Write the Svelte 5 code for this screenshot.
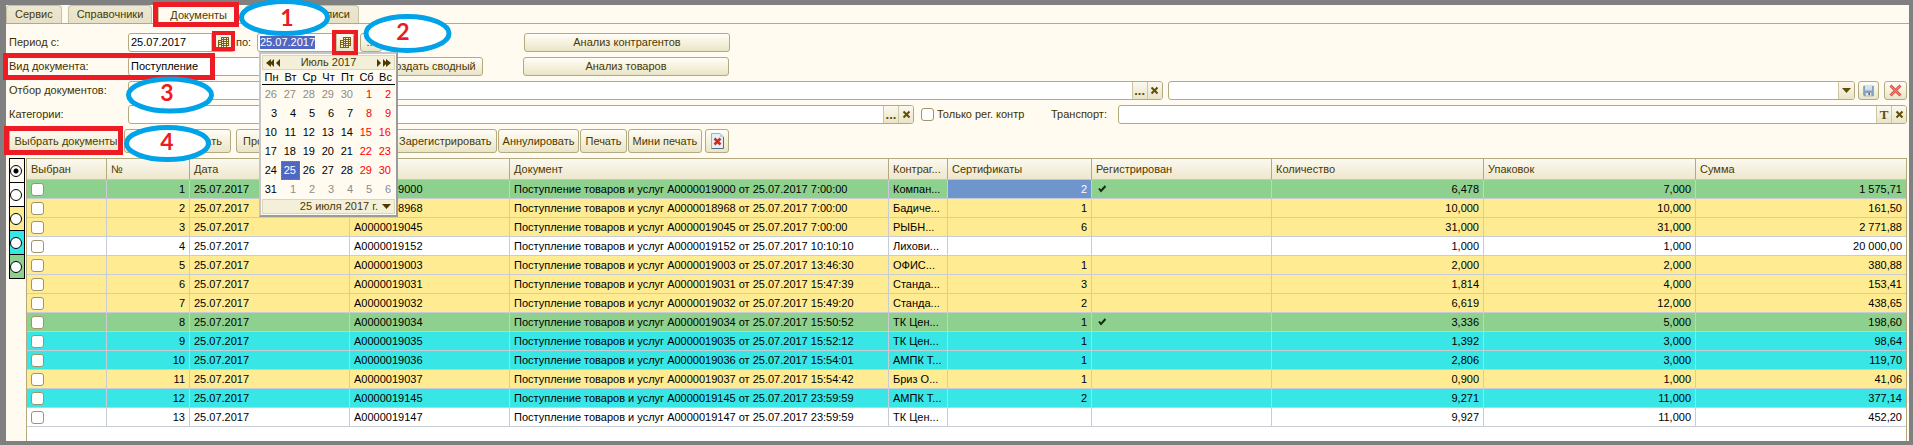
<script lang="ts">
	import { onMount } from 'svelte';

	const tabs = [
		{ title: 'Сервис', wide: false },
		{ title: 'Справочники', wide: false },
		{ title: 'Документы', wide: false },
		{ title: 'Записи', wide: true }
	];
	let activeTab = 'Документы';

	let dateFrom = '25.07.2017';
	let dateTo = '25.07.2017';
	let dateToInput: HTMLInputElement;

	const weekdays = ['Пн', 'Вт', 'Ср', 'Чт', 'Пт', 'Сб', 'Вс'];
	const weeks = [
		[26, 27, 28, 29, 30, 1, 2],
		[3, 4, 5, 6, 7, 8, 9],
		[10, 11, 12, 13, 14, 15, 16],
		[17, 18, 19, 20, 21, 22, 23],
		[24, 25, 26, 27, 28, 29, 30],
		[31, 1, 2, 3, 4, 5, 6]
	];
	let selectedDay = 25;

	const legend = ['cream', 'white', 'yellow', 'cyan', 'green'];
	let filter = 'cream';

	const columns = ['Выбран', '№', 'Дата', '', 'Документ', 'Контраг...', 'Сертификаты', 'Регистрирован', 'Количество', 'Упаковок', 'Сумма'];

	const rows = [
		{ color: 'green', num: '0000019000', time: '7:00:00', agent: 'Компан...', cert: '2', reg: true, qty: '6,478', packs: '7,000', sum: '1 575,71' },
		{ color: 'yellow', num: '0000018968', time: '7:00:00', agent: 'Бадиче...', cert: '1', reg: false, qty: '10,000', packs: '10,000', sum: '161,50' },
		{ color: 'yellow', num: '0000019045', time: '7:00:00', agent: 'РЫБН...', cert: '6', reg: false, qty: '31,000', packs: '31,000', sum: '2 771,88' },
		{ color: 'white', num: '0000019152', time: '10:10:10', agent: 'Лихови...', cert: '', reg: false, qty: '1,000', packs: '1,000', sum: '20 000,00' },
		{ color: 'yellow', num: '0000019003', time: '13:46:30', agent: 'ОФИС...', cert: '1', reg: false, qty: '2,000', packs: '2,000', sum: '380,88' },
		{ color: 'yellow', num: '0000019031', time: '15:47:39', agent: 'Станда...', cert: '3', reg: false, qty: '1,814', packs: '4,000', sum: '153,41' },
		{ color: 'yellow', num: '0000019032', time: '15:49:20', agent: 'Станда...', cert: '2', reg: false, qty: '6,619', packs: '12,000', sum: '438,65' },
		{ color: 'green', num: '0000019034', time: '15:50:52', agent: 'ТК Цен...', cert: '1', reg: true, qty: '3,336', packs: '5,000', sum: '198,60' },
		{ color: 'cyan', num: '0000019035', time: '15:52:12', agent: 'ТК Цен...', cert: '1', reg: false, qty: '1,392', packs: '3,000', sum: '98,64' },
		{ color: 'cyan', num: '0000019036', time: '15:54:01', agent: 'АМПК Т...', cert: '1', reg: false, qty: '2,806', packs: '3,000', sum: '119,70' },
		{ color: 'yellow', num: '0000019037', time: '15:54:42', agent: 'Бриз О...', cert: '1', reg: false, qty: '0,900', packs: '1,000', sum: '41,06' },
		{ color: 'cyan', num: '0000019145', time: '23:59:59', agent: 'АМПК Т...', cert: '2', reg: false, qty: '9,271', packs: '11,000', sum: '377,14' },
		{ color: 'white', num: '0000019147', time: '23:59:59', agent: 'ТК Цен...', cert: '', reg: false, qty: '9,927', packs: '11,000', sum: '452,20' }
	];

	// first row holds the previous month, last row the next one
	function isOther(week: number, day: number) {
		return (week === 0 && day > 20) || (week === 5 && day < 10);
	}

	onMount(() => {
		dateToInput.focus();
		dateToInput.select();
	});
</script>

{#snippet cross()}
	<svg width="9" height="9" viewBox="0 0 9 9"><path d="M1.5 1.5 7.5 7.5M7.5 1.5 1.5 7.5" stroke="#5f4d08" stroke-width="2" /></svg>
{/snippet}

{#snippet calendarIcon()}
	<svg width="11" height="11" viewBox="0 0 11 11">
		<path d="M3 0h8v9H9v2H0V3h3z" fill="#7a6116" />
		<path d="M4 1h1v1H4zM6 1h2v1H6zM9 1h1v1H9zM1 4h2v1H1zM4 3h1v1H4zM6 3h2v1H6zM9 3h1v1H9zM4 5h1v1H4zM6 5h2v1H6zM9 5h1v1H9zM1 6h2v1H1zM4 7h1v1H4zM6 7h2v1H6zM9 7h1v1H9zM1 8h2v2H1zM4 9h1v1H4zM6 9h2v1H6z" fill="#f6f0d8" />
	</svg>
{/snippet}

<main>
	<nav>
		{#each tabs as tab}
			<button class="tab" class:active={tab.title === activeTab} class:wide={tab.wide} on:click={() => (activeTab = tab.title)}>{tab.title}</button>
		{/each}
	</nav>

	<section class="form">
		<div class="row">
			<label class="caption" for="from">Период с:</label>
			<div class="field date-from">
				<input id="from" bind:value={dateFrom} />
				<button class="calendar-button" aria-label="Выбрать дату начала">{@render calendarIcon()}</button>
			</div>
			<label class="to" for="to">по:</label>
			<div class="date-to">
				<div class="field">
					<input id="to" bind:value={dateTo} bind:this={dateToInput} />
					<button class="calendar-button" aria-label="Выбрать дату окончания">{@render calendarIcon()}</button>
				</div>
				<div class="calendar">
					<div class="month">
						<button aria-label="Назад">
							<svg width="14" height="8" viewBox="0 0 14 8"><path d="M5 0v8L0 4zM8 0v8L4 4zM14 0v8L10 4z" fill="#4b3900" /></svg>
						</button>
						<span>Июль 2017</span>
						<button aria-label="Вперёд">
							<svg width="14" height="8" viewBox="0 0 14 8"><path d="M0 0v8L4 4zM6 0v8L10 4zM9 0v8L14 4z" fill="#4b3900" /></svg>
						</button>
					</div>
					<table class="days">
						<thead>
							<tr>{#each weekdays as day}<th>{day}</th>{/each}</tr>
						</thead>
						<tbody>
							{#each weeks as week, w}
								<tr>
									{#each week as day, d}
										<td class:weekend={d > 4} class:other={isOther(w, day)} class:selected={day === selectedDay && !isOther(w, day)}>{day}</td>
									{/each}
								</tr>
							{/each}
						</tbody>
					</table>
					<button class="today">
						25 июля 2017 г.
						<svg width="9" height="5" viewBox="0 0 9 5"><path d="M0 0h9L4.500 5z" fill="#4b3900" /></svg>
					</button>
				</div>
			</div>
			<button class="btn more">...</button>
			<button class="btn analysis">Анализ контрагентов</button>
		</div>

		<div class="row">
			<label class="caption" for="kind">Вид документа:</label>
			<div class="field kind">
				<select id="kind"><option>Поступление</option></select>
			</div>
			<button class="btn summary">Создать сводный</button>
			<button class="btn analysis second">Анализ товаров</button>
		</div>

		<div class="row">
			<label class="caption" for="docs">Отбор документов:</label>
			<div class="field docs">
				<input id="docs" />
				<button class="dots">...</button>
				<button aria-label="Очистить отбор">{@render cross()}</button>
			</div>
			<div class="field preset">
				<select aria-label="Вариант отбора"><option></option></select>
				<span class="arrow">
					<svg width="9" height="5" viewBox="0 0 9 5"><path d="M0 0h9L4.500 5z" fill="#5f4d08" /></svg>
				</span>
			</div>
			<button class="btn save" aria-label="Сохранить">
				<svg width="16" height="16" viewBox="0 0 16 16">
					<path d="M1 1h14v14H2L1 14z" fill="#86a9c6" stroke="#6787a3" />
					<path d="M3 1h10v6H3z" fill="#e9f4fb" />
					<path d="M3 3.500h10M3 5.500h10" stroke="#a9cbe2" />
					<path d="M4 9h8v6H4z" fill="#e3e5e8" />
					<path d="M4 9h8v1H4zM8 11h2v3H8z" fill="#4b5259" />
				</svg>
			</button>
			<button class="btn remove" aria-label="Удалить">
				<svg width="13" height="13" viewBox="0 0 13 13">
					<path d="M1.500 1.500 11.500 11.500M11.500 1.500 1.500 11.500" stroke="#d9574c" stroke-width="3" />
					<path d="M2 2 11 11M11 2 2 11" stroke="#f58a7c" stroke-width="1" />
				</svg>
			</button>
		</div>

		<div class="row">
			<label class="caption" for="cats">Категории:</label>
			<div class="field cats">
				<input id="cats" />
				<button class="dots">...</button>
				<button aria-label="Очистить категории">{@render cross()}</button>
			</div>
			<label class="only"><input type="checkbox" />Только рег. контр</label>
			<label class="transport-label" for="transport">Транспорт:</label>
			<div class="field transport">
				<input id="transport" />
				<button class="type">T</button>
				<button aria-label="Очистить транспорт">{@render cross()}</button>
			</div>
		</div>

		<div class="toolbar">
			<button class="btn choose">Выбрать документы</button>
			<button class="btn print-all">Печатать</button>
			<button class="btn preview">Провести</button>
			<button class="btn">Зарегистрировать</button>
			<button class="btn">Аннулировать</button>
			<button class="btn">Печать</button>
			<button class="btn">Мини печать</button>
			<button class="btn close" aria-label="Очистить">
				<svg width="13" height="16" viewBox="0 0 13 16">
					<path d="M.5.5h8.500l3.500 3.500v11.500H.5z" fill="#e4f0f7" stroke="#9bb3c3" />
					<path d="M12.500 4v11.500H.5" fill="none" stroke="#546f82" />
					<path d="M9 0v4h4" fill="#b8d3e4" />
					<path d="M3.500 5.500 9.500 11.500M9.500 5.500 3.500 11.500" stroke="#d02a20" stroke-width="2.500" />
				</svg>
			</button>
		</div>
	</section>

	<section class="list">
		<div class="legend">
			{#each legend as color}
				<label class={color}><input type="radio" value={color} bind:group={filter} aria-label={color} /></label>
			{/each}
		</div>
		<div class="grid">
			<table class="documents">
				<colgroup>
					{#each columns as _, i}<col class="c{i}" />{/each}
				</colgroup>
				<thead>
					<tr>
						{#each columns as title}<th>{title}</th>{/each}
					</tr>
				</thead>
				<tbody>
					{#each rows as row, i}
						<tr class={row.color}>
							<td><input type="checkbox" aria-label="Выбрать строку {i + 1}" /></td>
							<td class="num">{i + 1}</td>
							<td>25.07.2017</td>
							<td>А{row.num}</td>
							<td>Поступление товаров и услуг А{row.num} от 25.07.2017 {row.time}</td>
							<td>{row.agent}</td>
							<td class="num" class:current={i === 0}>{row.cert}</td>
							<td>
								{#if row.reg}
									<svg class="check" width="8" height="8" viewBox="0 0 8 8"><path d="M1 3.500 3 6 7.500 1" fill="none" stroke="#132b13" stroke-width="2" /></svg>
								{/if}
							</td>
							<td class="num">{row.qty}</td>
							<td class="num">{row.packs}</td>
							<td class="num">{row.sum}</td>
						</tr>
					{/each}
				</tbody>
			</table>
		</div>
	</section>

	<svg class="marks" width="460" height="170" viewBox="0 0 460 170">
		<g fill="none" stroke="#ed1c24" stroke-width="4">
			<rect x="155.500" y="4.500" width="81" height="20" stroke-width="5" />
			<rect x="214" y="33" width="19" height="16" />
			<rect x="334" y="32" width="22" height="21" />
			<rect x="5.500" y="55.500" width="207" height="22" stroke-width="5" />
			<rect x="6.500" y="128.500" width="114" height="24" stroke-width="5" />
		</g>
		<g fill="#fff" stroke="#00a2e8" stroke-width="5">
			<ellipse cx="284.500" cy="17.500" rx="43" ry="16" />
			<ellipse cx="407.500" cy="33.500" rx="41.500" ry="17" />
			<ellipse cx="170" cy="95" rx="41.500" ry="16" />
			<ellipse cx="167.500" cy="143.500" rx="41" ry="16" />
		</g>
		<g class="digits">
			<text x="287" y="26">1</text>
			<text x="403" y="40">2</text>
			<text x="167" y="101">3</text>
			<text x="167" y="150">4</text>
		</g>
	</svg>
</main>

<style>
	:global(body) {
		background: #808080;
	}

	main {
		position: relative;
		display: flex;
		flex-direction: column;
		box-sizing: border-box;
		min-height: 100vh;
		border: solid #808080;
		border-width: 5px 4px 4px 6px;
		background: #fffbf0;
		color: #3f3000;
		font: 11px/13px 'Liberation Sans', Arial, sans-serif;
	}

	button,
	input,
	select {
		margin: 0;
		padding: 0;
		font: inherit;
		color: inherit;
		outline: none;
	}

	svg {
		display: block;
	}

	nav {
		display: flex;
		align-items: flex-end;
		gap: 6px;
		height: 18px;
		border-bottom: 1px solid #b3aa80;
	}

	.tab {
		height: 18px;
		padding: 0 8px;
		border: 1px solid #c9c19d;
		border-bottom: none;
		border-radius: 4px 4px 0 0;
		background: linear-gradient(#ece8d2, #e6e1c6);
		color: #4b3900;
	}

	.tab.active {
		height: 19px;
		margin-bottom: -1px;
		padding: 0 11px;
		background: #fffbf0;
	}

	.tab.wide {
		width: 114px;
		text-align: right;
	}

	.form {
		display: flex;
		flex-direction: column;
		gap: 5px;
		padding: 9px 2px 5px 2px;
	}

	.row {
		display: flex;
		align-items: center;
		height: 19px;
	}

	.caption {
		flex: 0 0 119px;
		padding-left: 1px;
	}

	.field {
		display: flex;
		box-sizing: border-box;
		height: 19px;
		border: 1px solid #b3aa80;
		border-radius: 3px;
		background: #fff;
		overflow: hidden;
	}

	.field input,
	.field select {
		flex: 1;
		min-width: 0;
		padding-left: 2px;
		border: none;
		appearance: none;
		background: transparent;
		color: #000;
	}

	.field input::selection {
		background: #4f67c0;
		color: #fff;
	}

	.field button,
	.arrow {
		display: flex;
		align-items: center;
		justify-content: center;
		width: 15px;
		border: none;
		border-left: 1px solid #cdc6a4;
		background: linear-gradient(#fbf9ee, #e9e4c8);
	}

	.field .calendar-button {
		width: 17px;
	}

	.date-from .calendar-button {
		width: 23px;
	}

	.field .dots,
	.field .type {
		font-weight: bold;
		font-size: 13px;
		color: #5f4d08;
	}

	.field .type {
		font-family: 'Liberation Serif', 'Times New Roman', serif;
	}

	.date-from {
		width: 107px;
	}

	.to {
		width: 21px;
		padding-left: 1px;
	}

	.date-to {
		position: relative;
		width: 97px;
	}

	.kind {
		width: 248px;
	}

	.docs {
		flex: 1035;
		margin-right: 5px;
	}

	.preset {
		flex: 687;
	}

	.arrow {
		pointer-events: none;
	}

	.cats {
		flex: 786;
	}

	.transport {
		flex: 789;
	}

	.btn {
		display: flex;
		align-items: center;
		justify-content: center;
		box-sizing: border-box;
		height: 19px;
		padding: 0 4px;
		border: 1px solid #b3aa80;
		border-radius: 3px;
		background: linear-gradient(#fffdf6, #f3efd9 60%, #e9e4c8);
		color: #4b3900;
		white-space: nowrap;
	}

	.more {
		width: 22px;
		margin-left: 6px;
	}

	.analysis {
		width: 206px;
		margin-left: 142px;
	}

	.analysis.second {
		margin-left: 40px;
	}

	.summary {
		width: 103px;
		margin-left: 4px;
	}

	.save {
		width: 21px;
		margin: 0 5px 0 3px;
	}

	.remove {
		width: 23px;
	}

	.only {
		display: flex;
		align-items: center;
		gap: 3px;
		width: 130px;
		margin-left: 7px;
	}

	.transport-label {
		width: 67px;
	}

	input[type='checkbox'] {
		flex: none;
		display: block;
		box-sizing: border-box;
		width: 13px;
		height: 13px;
		border: 1px solid #a0946a;
		border-radius: 3px;
		appearance: none;
		background: #fff;
	}

	.toolbar {
		display: flex;
		gap: 1px;
		padding-left: 1px;
	}

	.toolbar .btn {
		height: 24px;
	}

	.choose {
		width: 114px;
	}

	.print-all {
		width: 107px;
		justify-content: flex-end;
		padding-right: 8px;
	}

	.preview {
		width: 157px;
		margin-left: 4px;
		padding-left: 6px;
		justify-content: flex-start;
	}

	.toolbar .close {
		width: 24px;
		margin-left: 2px;
	}

	/* drop-down calendar */
	.calendar {
		position: absolute;
		z-index: 2;
		top: 19px;
		left: 2px;
		width: 133px;
		padding: 1px;
		border: 2px solid #c6c6c6;
		border-right-color: #9b9b9b;
		border-bottom-color: #9b9b9b;
		background: #fffbf0;
	}

	.month,
	.today {
		display: flex;
		align-items: center;
		justify-content: space-between;
		box-sizing: border-box;
		width: 100%;
		height: 15px;
		padding: 0 3px;
		border: 1px solid #dcd6b6;
		background: #f3efd9;
		color: #4b3900;
	}

	.month button {
		border: none;
		background: none;
	}

	.today {
		justify-content: flex-end;
		gap: 4px;
	}

	.days {
		width: 100%;
		border-collapse: collapse;
		table-layout: fixed;
		color: #000;
	}

	.days th {
		height: 14px;
		padding: 0;
		border-bottom: 1px solid #000;
		font-weight: normal;
	}

	.days td {
		box-sizing: border-box;
		height: 19px;
		padding: 0 4px 0 0;
		text-align: right;
	}

	.days .weekend {
		color: #f00;
	}

	.days .other:not(.weekend),
	.days tr:last-child .other {
		color: #8c8c8c;
	}

	.days .selected {
		background: #4f67c0;
		outline: 1px dotted #a08a30;
		outline-offset: -1px;
		color: #fff;
	}

	/* list of documents */
	.list {
		flex: 1;
		display: flex;
		align-items: stretch;
		padding: 0 2px 0 3px;
	}

	.legend {
		width: 16px;
		margin-right: 1px;
	}

	.legend label {
		display: flex;
		align-items: center;
		box-sizing: border-box;
		height: 24px;
		border: 1px solid #000;
		border-bottom: none;
	}

	.legend label:last-child {
		height: 25px;
		border-bottom: 1px solid #000;
	}

	.legend input {
		box-sizing: border-box;
		width: 12px;
		height: 12px;
		border: 1px solid #000;
		border-radius: 50%;
		appearance: none;
		background: #fff;
	}

	.legend input:checked {
		background: radial-gradient(#000 2px, #fff 3px);
	}

	.grid {
		flex: 1;
		min-width: 0;
		border: 1px solid #b3aa80;
		border-bottom: none;
		background: #fff;
	}

	.documents {
		width: 100%;
		border-spacing: 0;
		table-layout: fixed;
		color: #000;
	}

	.documents th {
		box-sizing: border-box;
		height: 21px;
		padding: 0 4px;
		border-right: 1px solid #b3aa80;
		border-bottom: 1px solid #cfc8a8;
		background: linear-gradient(#fbf9f0, #eee7cd);
		color: #4b3900;
		font-weight: normal;
		text-align: left;
		white-space: nowrap;
	}

	.documents td {
		box-sizing: border-box;
		height: 19px;
		padding: 0 4px;
		border-right: 1px solid #c8ccd4;
		border-bottom: 1px solid #c8ccd4;
		overflow: hidden;
		white-space: nowrap;
	}

	.documents th:last-child,
	.documents td:last-child {
		border-right: none;
	}

	.documents .num {
		text-align: right;
	}

	.documents .current {
		background: #6e96cd;
		color: #fff;
	}

	.check {
		margin-left: 2px;
	}

	.c0 { width: 80px; }
	.c1 { width: 83px; }
	.c2 { width: 160px; }
	.c3 { width: 160px; }
	.c4 { width: 379px; }
	.c5 { width: 59px; }
	.c6 { width: 144px; }
	.c7 { width: 180px; }
	.c8 { width: 212px; }
	.c9 { width: 212px; }

	.cream { background: #fffbf0; }
	.white { background: #fff; }
	.yellow { background: #ffeb91; }
	.cyan { background: #38e6e6; }
	.green { background: #8ed18e; }

	.marks {
		position: absolute;
		z-index: 3;
		top: -5px;
		left: -6px;
		pointer-events: none;
	}

	.digits {
		fill: #ed1c24;
		font: bold 23px Lato, 'Open Sans', sans-serif;
		text-anchor: middle;
	}
</style>
